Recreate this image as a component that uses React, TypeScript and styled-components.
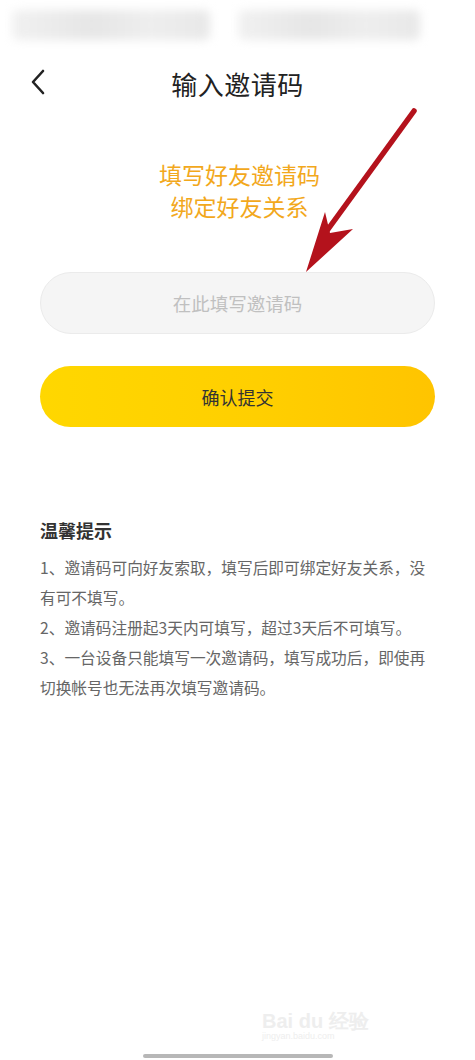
import React from "react";
import styled, { createGlobalStyle } from "styled-components";

const GlobalStyle = createGlobalStyle`
  html, body {
    margin: 0;
    padding: 0;
    background: #ffffff;
  }
  body {
    font-family: "Noto Sans CJK SC", "Noto Sans", "Liberation Sans", sans-serif;
  }
`;

const Screen = styled.div`
  position: relative;
  width: 475px;
  height: 1060px;
  display: flex;
  flex-direction: column;
  overflow: hidden;
  background: #fff;
`;

const StatusBar = styled.div`
  height: 52px;
  display: flex;
  align-items: flex-start;
  gap: 28px;
  padding: 10px 0 0 12px;
  box-sizing: border-box;
`;

const Blurred = styled.div<{ $w: number }>`
  width: ${(p) => p.$w}px;
  height: 30px;
  background: linear-gradient(90deg, #f1f1f1 0%, #e6e6e6 40%, #eeeeee 70%, #e8e8e8 100%);
  filter: blur(5px);
  border-radius: 6px;
`;

const NavBar = styled.div`
  position: relative;
  height: 62px;
  display: flex;
  align-items: center;
  justify-content: center;
`;

const BackButton = styled.button`
  position: absolute;
  left: 24px;
  top: 15px;
  width: 28px;
  height: 30px;
  padding: 0;
  border: none;
  background: none;
  display: flex;
  align-items: center;
  justify-content: center;
`;

const Title = styled.h1`
  margin: 0;
  font-size: 26px;
  font-weight: 400;
  color: #222;
  letter-spacing: 0.5px;
`;

const Body = styled.div`
  position: relative;
  padding: 0 40px;
  display: flex;
  flex-direction: column;
`;

const Promo = styled.div`
  margin-top: 44px;
  text-align: center;
  font-size: 23px;
  line-height: 32px;
  color: #f2a81c;
  padding-left: 4px;
`;

const CodeInput = styled.input`
  margin-top: 50px;
  height: 62px;
  border-radius: 31px;
  border: 1px solid #ebebeb;
  background: #f5f5f5;
  box-sizing: border-box;
  text-align: center;
  font-family: inherit;
  font-size: 18.5px;
  color: #333;
  outline: none;

  &::placeholder {
    color: #c0c0c0;
  }
`;

const SubmitButton = styled.button`
  margin-top: 32px;
  height: 61px;
  border: none;
  border-radius: 31px;
  background: linear-gradient(90deg, #ffd700 0%, #ffcf00 55%, #ffc400 100%);
  font-family: inherit;
  font-size: 18px;
  color: #333;
`;

const Tips = styled.div`
  margin-top: 90px;
`;

const TipsTitle = styled.h3`
  margin: 0 0 10px;
  font-size: 18px;
  font-weight: 700;
  color: #333;
  line-height: 26px;
`;

const TipLine = styled.p`
  margin: 0;
  font-size: 15.7px;
  line-height: 30px;
  color: #666;
  width: 396px;
`;

const Arrow = styled.svg`
  position: absolute;
  left: 0;
  top: 0;
  pointer-events: none;
`;

const HomeBar = styled.div`
  margin: auto auto 2px;
  width: 190px;
  height: 4px;
  border-radius: 2px;
  background: #b7b7b7;
`;

const Watermark = styled.div`
  position: absolute;
  left: 262px;
  top: 1010px;
  color: #eeeeee;
  font-family: "Liberation Sans", sans-serif;
  line-height: 1.1;
`;

const WatermarkMain = styled.div`
  font-size: 20px;
  font-weight: 700;
`;

const WatermarkSub = styled.div`
  font-size: 9px;
`;

const tips = [
  "1、邀请码可向好友索取，填写后即可绑定好友关系，没有可不填写。",
  "2、邀请码注册起3天内可填写，超过3天后不可填写。",
  "3、一台设备只能填写一次邀请码，填写成功后，即使再切换帐号也无法再次填写邀请码。",
];

const App: React.FC = () => {
  return (
    <Screen>
      <GlobalStyle />
      <StatusBar>
        <Blurred $w={198} />
        <Blurred $w={182} />
      </StatusBar>
      <NavBar>
        <BackButton aria-label="返回">
          <svg width="18" height="26" viewBox="0 0 18 26">
            <path d="M14 2 L4 13 L14 24" fill="none" stroke="#222" strokeWidth="2.6" strokeLinecap="round" strokeLinejoin="round" />
          </svg>
        </BackButton>
        <Title>输入邀请码</Title>
      </NavBar>
      <Body>
        <Promo>
          填写好友邀请码
          <br />
          绑定好友关系
        </Promo>
        <CodeInput placeholder="在此填写邀请码" />
        <SubmitButton>确认提交</SubmitButton>
        <Tips>
          <TipsTitle>温馨提示</TipsTitle>
          {tips.map((t) => (
            <TipLine key={t}>{t}</TipLine>
          ))}
        </Tips>
      </Body>
      <HomeBar />
      <Watermark>
        <WatermarkMain>Bai du 经验</WatermarkMain>
        <WatermarkSub>jingyan.baidu.com</WatermarkSub>
      </Watermark>
      <Arrow width="475" height="300" viewBox="0 0 475 300">
        <line x1="414" y1="111" x2="326" y2="232" stroke="#b4121c" strokeWidth="5.5" strokeLinecap="round" />
        <path d="M306 272 L325 212 L330 233 L353 229 Z" fill="#b4121c" />
      </Arrow>
    </Screen>
  );
};

export default App;
